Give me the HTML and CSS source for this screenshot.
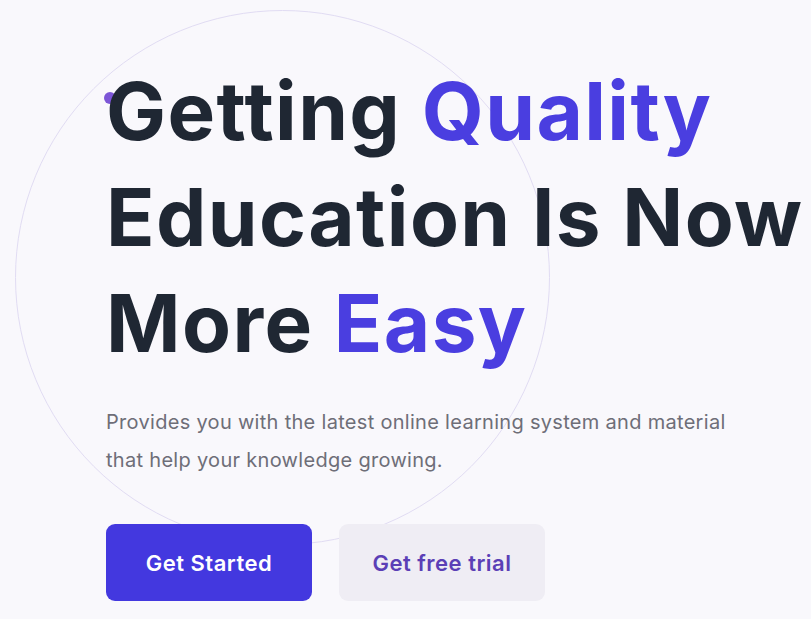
FILE: index.html
```html
<!DOCTYPE html>
<html lang="en">
<head>
<meta charset="utf-8">
<title>Hero</title>
<link rel="stylesheet" href="styles.css">
</head>
<body>
<section class="hero">
  <div class="ring"></div>
  <span class="dot"></span>
  <div class="content">
    <h1 class="title">Getting <span class="accent">Quality</span><br>Education Is Now<br>More <span class="accent">Easy</span></h1>
    <p class="lead">Provides you with the latest online learning system and material that help your knowledge growing.</p>
    <div class="actions">
      <a class="btn btn-primary" href="#">Get Started</a>
      <a class="btn btn-secondary" href="#">Get free trial</a>
    </div>
  </div>
</section>
</body>
</html>
```
FILE: styles.css
```css
* { box-sizing: border-box; }
html, body { margin: 0; padding: 0; }
body {
  background: #f9f8fc;
  font-family: Inter, "Noto Sans", sans-serif;
  width: 811px;
  height: 619px;
  overflow: hidden;
}
.hero {
  position: relative;
  height: 619px;
}
.ring {
  position: absolute;
  left: 15px;
  top: 10px;
  width: 535px;
  height: 535px;
  border: 1.5px solid #e1dcf3;
  border-radius: 50%;
}
.dot {
  position: absolute;
  left: 104px;
  top: 92px;
  width: 12px;
  height: 12px;
  border-radius: 50%;
  background: #7c55d6;
}
.content {
  position: relative;
  padding: 58px 0 0 106px;
}
.title {
  margin: 0;
  font-size: 80px;
  line-height: 106px;
  font-weight: 700;
  color: #1f2733;
  letter-spacing: 1.4px;
  white-space: nowrap;
}
.accent { color: #4a3ee0; }
.lead {
  margin: 27px 0 0;
  width: 650px;
  font-size: 20px;
  line-height: 38px;
  letter-spacing: 0.3px;
  color: #6e6e78;
}
.actions {
  display: flex;
  gap: 27px;
  margin-top: 45px;
}
.btn {
  display: flex;
  align-items: center;
  justify-content: center;
  width: 206px;
  height: 77px;
  border-radius: 9px;
  font-size: 22px;
  font-weight: 600;
  letter-spacing: 0.5px;
  text-decoration: none;
}
.btn-primary {
  background: #4338df;
  color: #ffffff;
}
.btn-secondary {
  background: #efedf4;
  color: #5b3fb6;
}
```
